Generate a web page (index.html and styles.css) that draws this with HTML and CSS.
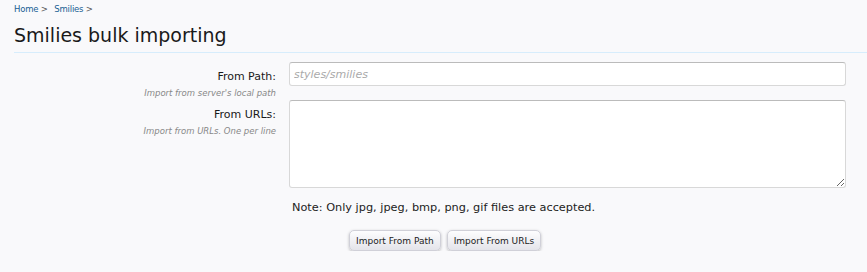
FILE: index.html
```html
<!DOCTYPE html>
<html lang="en">
<head>
  <meta charset="UTF-8">
  <title>Smilies bulk importing</title>
  <link rel="stylesheet" href="styles.css">
</head>
<body>

  <div class="breadcrumb">
    <a href="#">Home</a> <span class="arrow">&gt;</span>
    <a href="#" class="crumb">Smilies</a> <span class="arrow">&gt;</span>
  </div>

  <h1 class="title">Smilies bulk importing</h1>

  <form class="form">
    <div class="row">
      <div class="label">
        <label for="path">From Path:</label>
        <div class="hint">Import from server's local path</div>
      </div>
      <div class="field">
        <input type="text" id="path" class="text-input" placeholder="styles/smilies">
      </div>
    </div>

    <div class="row">
      <div class="label">
        <label for="urls">From URLs:</label>
        <div class="hint">Import from URLs. One per line</div>
      </div>
      <div class="field">
        <textarea id="urls" class="text-area"></textarea>
        <p class="note">Note: Only jpg, jpeg, bmp, png, gif files are accepted.</p>
      </div>
    </div>

    <div class="buttons">
      <button type="button" class="button">Import From Path</button>
      <button type="button" class="button">Import From URLs</button>
    </div>
  </form>

</body>
</html>
```

FILE: styles.css
```css
body {
  margin: 0;
  background: #f9f9fb;
  font-family: "DejaVu Sans", Verdana, sans-serif;
  color: #222;
}
.breadcrumb {
  padding: 4px 0 0 14px;
  font-size: 8.5px;
  letter-spacing: -0.2px;
  height: 13px;
}
.breadcrumb a {
  color: #176093;
  text-decoration: none;
}
.breadcrumb .arrow {
  color: #555;
  margin-right: 4px;
}
.title {
  margin: 7px 0 0 14px;
  padding-bottom: 6px;
  font-size: 19px;
  font-weight: normal;
  color: #1a1a1a;
  border-bottom: 1px solid #d7edfc;
}
.form {
  margin: 9px 21px 0 14px;
}
.row {
  display: grid;
  grid-template-columns: 262px 1fr;
  column-gap: 13px;
  margin-bottom: 2px;
}
.label {
  text-align: right;
  padding-top: 3px;
}
.label label {
  font-size: 11px;
  color: #1a1a1a;
}
.hint {
  font-size: 8.5px;
  font-style: italic;
  color: #888;
  margin-top: 4px;
}
.text-input, .text-area {
  display: block;
  box-sizing: border-box;
  width: 100%;
  border: 1px solid #d8d8d8;
  border-top-color: #bbb;
  border-radius: 3px;
  background: #fff;
  font-family: "DejaVu Sans", sans-serif;
  font-size: 11px;
  padding: 3px 4px;
}
.text-input {
  height: 24px;
}
.text-input::placeholder {
  color: #aaa;
  font-style: italic;
}
.text-area {
  height: 88px;
  resize: vertical;
}
.note {
  margin: 13px 0 0 3px;
  font-size: 11.3px;
  color: #222;
}
.buttons {
  margin-top: 16px;
  padding-left: 335px;
  display: flex;
  gap: 6px;
}
.button {
  height: 21px;
  padding: 0 6px;
  font-family: "DejaVu Sans", sans-serif;
  font-size: 9px;
  color: #222;
  background: linear-gradient(#fdfdfe, #e4e4ea);
  border: 1px solid #d0d0d8;
  border-radius: 5px;
  box-shadow: 0 1px 3px rgba(0,0,0,0.25);
}
```
